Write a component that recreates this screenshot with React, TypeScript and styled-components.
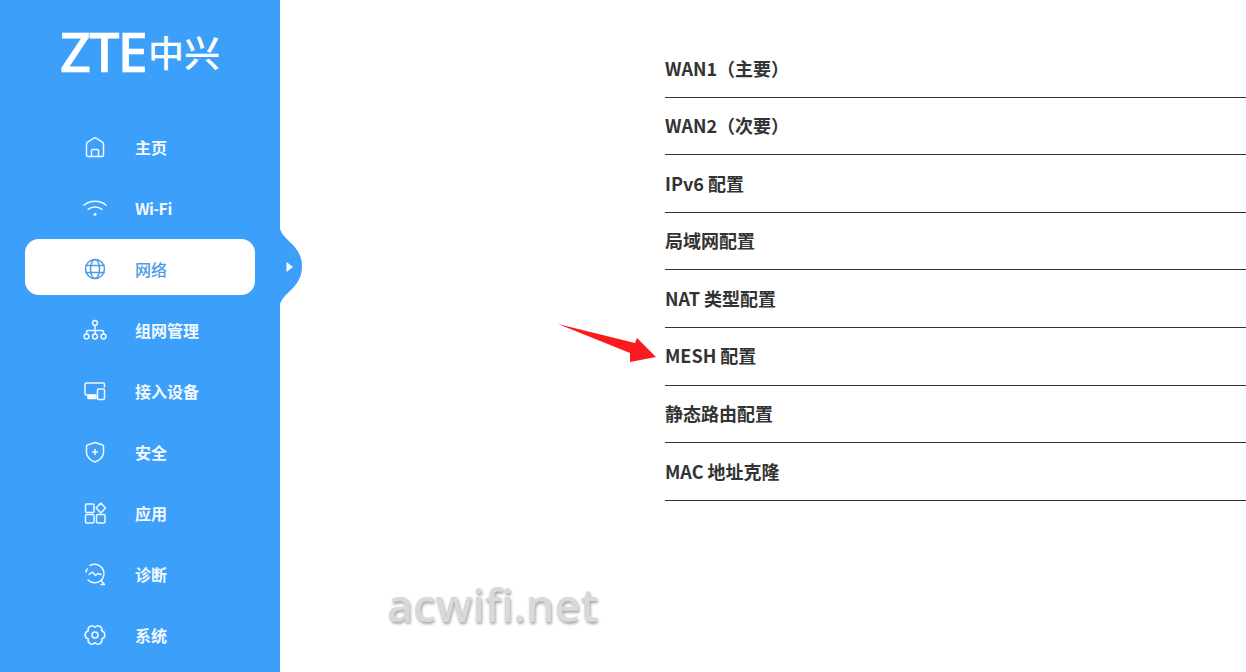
import React from "react"
import styled, { createGlobalStyle } from "styled-components"

const GlobalStyle = createGlobalStyle`
  html, body {
    margin: 0;
    padding: 0;
    background: #fff;
    overflow: hidden;
  }
  * {
    box-sizing: border-box;
  }
`

const navItems = [
  { label: "主页", icon: <HomeIcon /> },
  { label: "Wi-Fi", icon: <WifiIcon />, tight: true },
  { label: "网络", icon: <GlobeIcon />, active: true },
  { label: "组网管理", icon: <TreeIcon /> },
  { label: "接入设备", icon: <DevicesIcon /> },
  { label: "安全", icon: <ShieldIcon /> },
  { label: "应用", icon: <AppsIcon /> },
  { label: "诊断", icon: <DiagnoseIcon /> },
  { label: "系统", icon: <GearIcon /> },
]

const menuRows = [
  "WAN1（主要）",
  "WAN2（次要）",
  "IPv6 配置",
  "局域网配置",
  "NAT 类型配置",
  "MESH 配置",
  "静态路由配置",
  "MAC 地址克隆",
]

export default function App() {
  return (
    <Page>
      <GlobalStyle />
      <Sidebar>
        <Logo>
          <LogoLatin>ZTE</LogoLatin>
          <LogoCjk>中兴</LogoCjk>
        </Logo>
        <Nav>
          {navItems.map((item) => (
            <NavItem key={item.label} $active={item.active}>
              <NavIcon>{item.icon}</NavIcon>
              <NavLabel $tight={item.tight}>{item.label}</NavLabel>
            </NavItem>
          ))}
        </Nav>
        <Notch width="23" height="75" viewBox="0 0 23 75">
          <path d="M0 0 C2 6 6 9 12 15 C19 22 22 29 22 37.5 C22 46 19 53 12 60 C6 66 2 69 0 75 Z" fill="#3ca0fa" />
          <path d="M6.5 33 L13 38 L6.5 43 Z" fill="#fff" />
        </Notch>
      </Sidebar>
      <Main>
        <Menu>
          {menuRows.map((row) => (
            <MenuRow key={row}>{row}</MenuRow>
          ))}
        </Menu>
        <Arrow width="100" height="44" viewBox="0 0 100 44">
          <path d="M1 1 L78 20 L80 15 L99 34 L73 39 L73 30 Z" fill="#fb1b1f" />
        </Arrow>
        <Watermark>acwifi.net</Watermark>
      </Main>
    </Page>
  )
}

function HomeIcon() {
  return (
    <Svg viewBox="0 0 24 24">
      <path d="M3.5 9.5 Q3.5 8 4.7 7.2 L11 3 Q12 2.4 13 3 L19.3 7.2 Q20.5 8 20.5 9.5 V20 Q20.5 21.5 19 21.5 H5 Q3.5 21.5 3.5 20 Z" />
      <path d="M8.5 21.5 V15.5 Q8.5 14.5 9.5 14.5 H14.5 Q15.5 14.5 15.5 15.5 V21.5" />
    </Svg>
  )
}

function WifiIcon() {
  return (
    <Svg viewBox="0 0 26 24">
      <path d="M1 9 C7.5 3.2 18.5 3.2 25 9" />
      <path d="M5.5 13.5 C9.5 10 16.5 10 20.5 13.5" />
      <circle cx="13" cy="19" r="1.6" fill="currentColor" stroke="none" />
    </Svg>
  )
}

function GlobeIcon() {
  return (
    <Svg viewBox="0 0 24 24">
      <circle cx="12" cy="12" r="9.5" />
      <ellipse cx="12" cy="12" rx="4.5" ry="9.5" />
      <path d="M3 8.5 H21 M3 15.5 H21" />
    </Svg>
  )
}

function TreeIcon() {
  return (
    <Svg viewBox="0 0 24 24">
      <circle cx="12" cy="5" r="2.4" />
      <circle cx="3.5" cy="18.5" r="2.4" />
      <circle cx="12" cy="18.5" r="2.4" />
      <circle cx="20.5" cy="18.5" r="2.4" />
      <path d="M12 7.4 V16.1 M3.5 16.1 V14 Q3.5 12.5 5 12.5 H19 Q20.5 12.5 20.5 14 V16.1" />
    </Svg>
  )
}

function DevicesIcon() {
  return (
    <Svg viewBox="0 0 24 24">
      <path d="M11 16 H3.5 Q2 16 2 14.5 V5.5 Q2 4 3.5 4 H20 Q21.5 4 21.5 5.5 V8" />
      <rect x="14.5" y="10" width="7" height="10.5" rx="1.2" />
      <path d="M5 19.5 H13 V16 H5 Z" fill="currentColor" />
    </Svg>
  )
}

function ShieldIcon() {
  return (
    <Svg viewBox="0 0 24 24">
      <path d="M12 2.5 L19.5 5 Q20.5 5.4 20.5 6.5 V13 C20.5 17 16 20.5 12 22 C8 20.5 3.5 17 3.5 13 V6.5 Q3.5 5.4 4.5 5 Z" />
      <path d="M12 9.5 V14.5 M9.5 12 H14.5" />
    </Svg>
  )
}

function AppsIcon() {
  return (
    <Svg viewBox="0 0 24 24">
      <rect x="2.5" y="3" width="8.5" height="8.5" rx="1.3" />
      <rect x="2.5" y="13.5" width="8.5" height="8.5" rx="1.3" />
      <rect x="13.5" y="13.5" width="8.5" height="8.5" rx="1.3" />
      <path d="M17.8 2 L22.5 7 L17.8 12 L13.2 7 Z" />
    </Svg>
  )
}

function DiagnoseIcon() {
  return (
    <Svg viewBox="0 0 24 24">
      <path d="M7 3.5 A9.3 9.3 0 1 1 5 18" />
      <path d="M4.2 7 A9.3 9.3 0 0 0 3 10" />
      <path d="M6 12.5 L9.5 10 L12.5 13.5 L15 11.5 L18 12.5" />
      <path d="M18 18.5 L21.5 22.5 H18" />
    </Svg>
  )
}

function GearIcon() {
  return (
    <Svg viewBox="0 0 24 24">
      <path d="M12 4.2 A4 4 0 0 1 18.75 8.1 A4 4 0 0 1 18.75 15.9 A4 4 0 0 1 12 19.8 A4 4 0 0 1 5.25 15.9 A4 4 0 0 1 5.25 8.1 A4 4 0 0 1 12 4.2 Z" />
      <circle cx="12" cy="12" r="3" />
    </Svg>
  )
}

const Page = styled.div`
  display: flex;
  width: 1246px;
  height: 672px;
  overflow: hidden;
  font-family: "Noto Sans", "Noto Sans CJK SC", sans-serif;
`

const Sidebar = styled.aside`
  position: relative;
  flex: 0 0 280px;
  display: flex;
  flex-direction: column;
  background: #3ca0fa;
`

const Logo = styled.div`
  display: flex;
  align-items: center;
  align-self: flex-start;
  height: 117px;
  padding: 0 0 15px 60px;
  color: #fff;
  white-space: nowrap;
`

const LogoLatin = styled.span`
  font-family: "Noto Sans", sans-serif;
  font-size: 54px;
  font-weight: 500;
  letter-spacing: -1.8px;
  line-height: 48px;
  -webkit-text-stroke: 0.6px #fff;
`

const LogoCjk = styled.span`
  margin-left: 2px;
  font-family: "Noto Sans CJK SC", sans-serif;
  font-size: 36px;
  font-weight: 500;
  line-height: 48px;
`

const Nav = styled.nav`
  display: flex;
  flex-direction: column;
  gap: 5px;
  padding: 0 25px;
`

const NavItem = styled.div<{ $active?: boolean }>`
  display: flex;
  align-items: center;
  height: 56px;
  padding: 4px 0 0 59px;
  border-radius: 14px;
  background: ${(p) => (p.$active ? "#fff" : "transparent")};
  color: ${(p) => (p.$active ? "#4c9be6" : "#f2f8ff")};
  font-family: "Noto Sans CJK SC", sans-serif;
  font-size: 16px;
  font-weight: ${(p) => (p.$active ? 500 : 700)};
`

const NavIcon = styled.span`
  display: flex;
  width: 52px;
  margin-left: -1px;
`

const NavLabel = styled.span<{ $tight?: boolean }>`
  letter-spacing: ${(p) => (p.$tight ? "-0.6px" : "0")};
`

const Svg = styled.svg.attrs({ fill: "none", stroke: "currentColor", strokeWidth: 1.5, strokeLinecap: "round", strokeLinejoin: "round" })`
  width: 24px;
  height: 24px;
`

const Notch = styled.svg`
  position: absolute;
  left: 280px;
  top: 229px;
`

const Main = styled.main`
  position: relative;
  flex: 1;
  padding: 40.2px 0 0 385px;
`

const Menu = styled.div`
  display: flex;
  flex-direction: column;
`

const MenuRow = styled.div`
  display: flex;
  align-items: center;
  height: 57.57px;
  padding-bottom: 1.7px;
  border-bottom: 1px solid #333;
  color: #333;
  font-family: "Noto Sans CJK SC", sans-serif;
  font-size: 18px;
  font-weight: 700;
`

const Arrow = styled.svg`
  position: absolute;
  left: 277px;
  top: 323px;
`

const Watermark = styled.div`
  position: absolute;
  left: 107px;
  top: 573px;
  font-family: "Open Sans", "Noto Sans", sans-serif;
  font-size: 45px;
  font-weight: 600;
  line-height: 64px;
  color: #d9d9d9;
  text-shadow: 1px 2px 3px #a3a3a3;
  filter: blur(0.7px);
`
